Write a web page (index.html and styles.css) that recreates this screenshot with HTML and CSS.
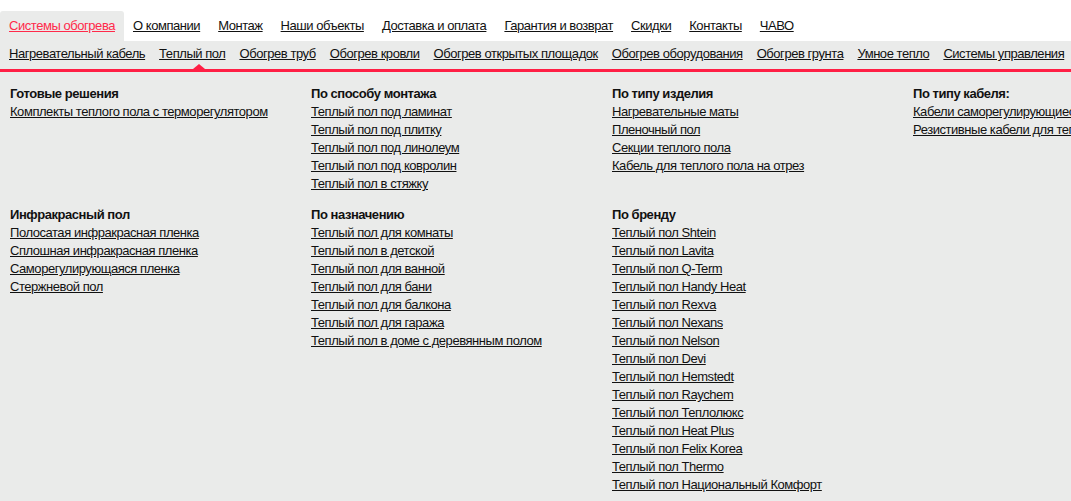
FILE: index.html
```html
<!DOCTYPE html>
<html lang="ru">
<head>
<meta charset="utf-8">
<title>Системы обогрева</title>
<link rel="stylesheet" href="styles.css">
</head>
<body>
<div class="page">
  <ul class="topnav">
    <li class="topnav-item active"><a href="#">Системы обогрева</a></li>
    <li class="topnav-item"><a href="#">О компании</a></li>
    <li class="topnav-item"><a href="#">Монтаж</a></li>
    <li class="topnav-item"><a href="#">Наши объекты</a></li>
    <li class="topnav-item"><a href="#">Доставка и оплата</a></li>
    <li class="topnav-item"><a href="#">Гарантия и возврат</a></li>
    <li class="topnav-item"><a href="#">Скидки</a></li>
    <li class="topnav-item"><a href="#">Контакты</a></li>
    <li class="topnav-item"><a href="#">ЧАВО</a></li>
  </ul>
  <ul class="subnav">
    <li class="subnav-item"><a href="#">Нагревательный кабель</a></li>
    <li class="subnav-item current"><a href="#">Теплый пол</a></li>
    <li class="subnav-item"><a href="#">Обогрев труб</a></li>
    <li class="subnav-item"><a href="#">Обогрев кровли</a></li>
    <li class="subnav-item"><a href="#">Обогрев открытых площадок</a></li>
    <li class="subnav-item"><a href="#">Обогрев оборудования</a></li>
    <li class="subnav-item"><a href="#">Обогрев грунта</a></li>
    <li class="subnav-item"><a href="#">Умное тепло</a></li>
    <li class="subnav-item"><a href="#">Системы управления</a></li>
  </ul>
  <div class="dropdown">
    <div class="group">
      <div class="group-title">Готовые решения</div>
      <a href="#">Комплекты теплого пола с терморегулятором</a>
    </div>
    <div class="group">
      <div class="group-title">По способу монтажа</div>
      <a href="#">Теплый пол под ламинат</a>
      <a href="#">Теплый пол под плитку</a>
      <a href="#">Теплый пол под линолеум</a>
      <a href="#">Теплый пол под ковролин</a>
      <a href="#">Теплый пол в стяжку</a>
    </div>
    <div class="group">
      <div class="group-title">По типу изделия</div>
      <a href="#">Нагревательные маты</a>
      <a href="#">Пленочный пол</a>
      <a href="#">Секции теплого пола</a>
      <a href="#">Кабель для теплого пола на отрез</a>
    </div>
    <div class="group">
      <div class="group-title">По типу кабеля:</div>
      <a href="#">Кабели саморегулирующиеся для теплого пола</a>
      <a href="#">Резистивные кабели для теплого пола</a>
    </div>
    <div class="group">
      <div class="group-title">Инфракрасный пол</div>
      <a href="#">Полосатая инфракрасная пленка</a>
      <a href="#">Сплошная инфракрасная пленка</a>
      <a href="#">Саморегулирующаяся пленка</a>
      <a href="#">Стержневой пол</a>
    </div>
    <div class="group">
      <div class="group-title">По назначению</div>
      <a href="#">Теплый пол для комнаты</a>
      <a href="#">Теплый пол в детской</a>
      <a href="#">Теплый пол для ванной</a>
      <a href="#">Теплый пол для бани</a>
      <a href="#">Теплый пол для балкона</a>
      <a href="#">Теплый пол для гаража</a>
      <a href="#">Теплый пол в доме с деревянным полом</a>
    </div>
    <div class="group">
      <div class="group-title">По бренду</div>
      <a href="#">Теплый пол Shtein</a>
      <a href="#">Теплый пол Lavita</a>
      <a href="#">Теплый пол Q-Term</a>
      <a href="#">Теплый пол Handy Heat</a>
      <a href="#">Теплый пол Rexva</a>
      <a href="#">Теплый пол Nexans</a>
      <a href="#">Теплый пол Nelson</a>
      <a href="#">Теплый пол Devi</a>
      <a href="#">Теплый пол Hemstedt</a>
      <a href="#">Теплый пол Raychem</a>
      <a href="#">Теплый пол Теплолюкс</a>
      <a href="#">Теплый пол Heat Plus</a>
      <a href="#">Теплый пол Felix Korea</a>
      <a href="#">Теплый пол Thermo</a>
      <a href="#">Теплый пол Национальный Комфорт</a>
    </div>
  </div>
</div>
</body>
</html>
```

FILE: styles.css
```css
html, body {
  margin: 0;
  padding: 0;
  background: #ffffff;
}

body {
  font-family: "Liberation Sans", Arial, sans-serif;
  font-size: 13px;
  letter-spacing: -0.45px;
  color: #111111;
  overflow: hidden;
}

a {
  color: #111111;
  text-decoration: underline;
}

.page {
  width: 1071px;
  height: 501px;
  overflow: hidden;
  background: #eaebea;
}

.topnav {
  list-style: none;
  margin: 0;
  padding: 11px 0 0 0;
  display: flex;
  background: #ffffff;
}

.topnav-item {
  padding: 0 9px;
  line-height: 30px;
  white-space: nowrap;
}

.topnav-item.active {
  background: #eaebea;
  border-radius: 3px 3px 0 0;
}

.topnav-item.active a {
  color: #ff2a4a;
}

.subnav {
  list-style: none;
  margin: 0;
  padding: 0 0 0 9px;
  display: flex;
  gap: 14px;
  height: 28px;
  line-height: 26px;
  border-bottom: 3px solid #ff1f45;
  white-space: nowrap;
}

.subnav-item {
  position: relative;
}

.subnav-item.current::after {
  content: "";
  position: absolute;
  left: 34px;
  bottom: 0;
  width: 0;
  height: 0;
  border-left: 6px solid transparent;
  border-right: 6px solid transparent;
  border-bottom: 5px solid #ff1f45;
}

.dropdown {
  display: grid;
  grid-template-columns: repeat(4, 301px);
  row-gap: 13px;
  padding: 13px 0 0 10px;
  line-height: 18px;
}

.group {
  display: flex;
  flex-direction: column;
  align-items: flex-start;
  white-space: nowrap;
}

.group-title {
  font-weight: bold;
  color: #111111;
}
```
